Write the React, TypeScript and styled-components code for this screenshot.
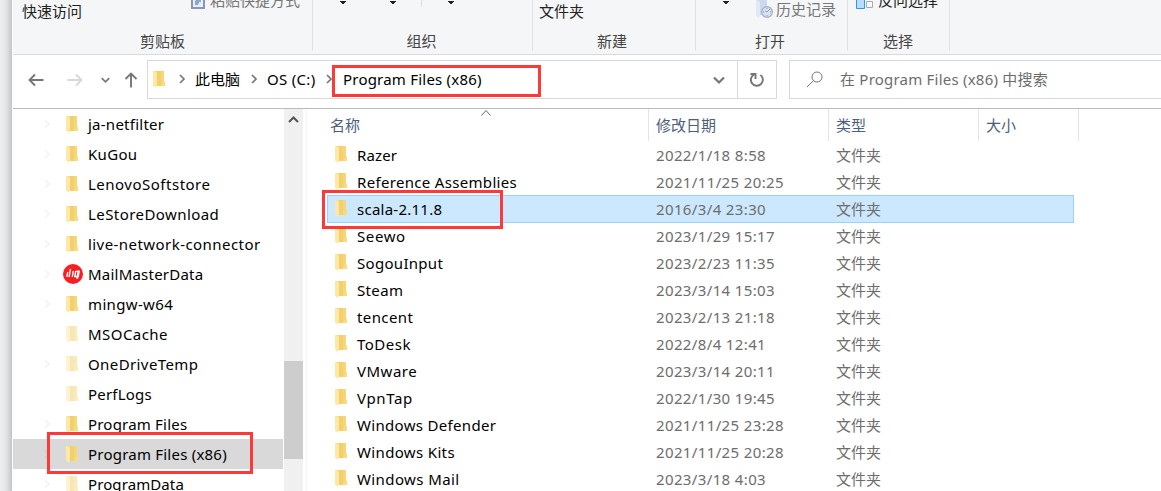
import styled, { createGlobalStyle, css } from 'styled-components'

type TreeEntry = { name: string; tracking: number; icon?: 'folder' | 'faded' | 'mail'; leaf?: boolean; selected?: boolean }

const TREE: TreeEntry[] = [
  { name: 'ja-netfilter', tracking: 0.25 },
  { name: 'KuGou', tracking: 0.3 },
  { name: 'LenovoSoftstore', tracking: 0.5 },
  { name: 'LeStoreDownload', tracking: 0.43 },
  { name: 'live-network-connector', tracking: 0.44 },
  { name: 'MailMasterData', tracking: 0.22, icon: 'mail' },
  { name: 'mingw-w64', tracking: 0.35 },
  { name: 'MSOCache', tracking: 0.45, icon: 'faded', leaf: true },
  { name: 'OneDriveTemp', tracking: 0.4, icon: 'faded' },
  { name: 'PerfLogs', tracking: 0.2, icon: 'faded', leaf: true },
  { name: 'Program Files', tracking: 0.2 },
  { name: 'Program Files (x86)', tracking: 0.22, selected: true },
  { name: 'ProgramData', tracking: 0.1, icon: 'faded' },
]

const FILES = [
  { name: 'Razer', tracking: 0.15, date: '2022/1/18 8:58' },
  { name: 'Reference Assemblies', tracking: 0.32, date: '2021/11/25 20:25' },
  { name: 'scala-2.11.8', tracking: 0.25, date: '2016/3/4 23:30', selected: true },
  { name: 'Seewo', tracking: 0.6, date: '2023/1/29 15:17' },
  { name: 'SogouInput', tracking: 0.3, date: '2023/2/23 11:35' },
  { name: 'Steam', tracking: 0.35, date: '2023/3/14 15:03' },
  { name: 'tencent', tracking: 0.4, date: '2023/2/13 21:18' },
  { name: 'ToDesk', tracking: 0.5, date: '2022/8/4 12:41' },
  { name: 'VMware', tracking: 0.5, date: '2023/3/14 20:11' },
  { name: 'VpnTap', tracking: 0.6, date: '2022/1/30 19:45' },
  { name: 'Windows Defender', tracking: 0.32, date: '2021/11/25 23:28' },
  { name: 'Windows Kits', tracking: 0.35, date: '2021/11/25 20:28' },
  { name: 'Windows Mail', tracking: 0.4, date: '2023/3/18 4:03' },
]

const FolderIcon = ({ faded = false }: { faded?: boolean }) => (
  <svg width="12" height="17" viewBox="0 0 12 17" opacity={faded ? 0.5 : 1}>
    <path d="M1 0h10v10.5h1V15H3z" fill="#fbdc7c" />
    <path d="M4 0h4v15H4z" fill="#f3d06e" />
    <path d="M8 0h3v10.5L8 14z" fill="#f7d677" />
    <path d="M0 0h1l3 2v12l-1 3-3-2.5z" fill="#ffe8a5" />
  </svg>
)

const MailIcon = () => (
  <svg width="20" height="20" viewBox="0 0 20 20">
    <circle cx="10" cy="10" r="10" fill="#fa1e23" />
    <path
      d="M4.7 8l-.9 5M7.5 5L6 13M10.3 7l-1 6M12.8 7l-1 5.5h2.5M16.3 6.5L15 13.5M13.5 7.2h2.8M15.2 7L14 15"
      fill="none"
      stroke="#fff"
      strokeWidth="1.4"
    />
  </svg>
)

const Chevron = ({ color = '#777' }: { color?: string }) => (
  <svg width="6" height="10" viewBox="0 0 6 10">
    <path d="M1 1l4 4-4 4" fill="none" stroke={color} strokeWidth="1.7" />
  </svg>
)

const DownChevron = ({ size = 12 }: { size?: number }) => (
  <svg width={size} height="8" viewBox="0 0 12 8">
    <path d="M1 1.5l5 5 5-5" fill="none" stroke="#767676" strokeWidth="2.2" />
  </svg>
)

const Arrow = ({ color, angle = 0 }: { color: string; angle?: number }) => (
  <svg width="16" height="16" viewBox="0 0 16 16">
    <path
      d="M15.5 8H1.5M7 2.5L1.5 8 7 13.5"
      fill="none"
      stroke={color}
      strokeWidth="1.9"
      transform={`rotate(${angle} 8 8)`}
    />
  </svg>
)

const MenuMark = () => (
  <svg width="8" height="5" viewBox="0 0 8 5">
    <path d="M1 1h6v1H6v1H5v1H3V3H2V2H1z" fill="#222" />
  </svg>
)

const PasteIcon = () => (
  <svg width="14" height="18" viewBox="0 0 14 18">
    <path d="M1 3h12v14H1z" fill="#e9eef7" stroke="#8697bb" strokeWidth="2" />
    <path d="M4 14v-4l2-2-1-1h5v5l-1-2-2 4z" fill="#8fa4cb" />
  </svg>
)

const HistoryIcon = () => (
  <svg width="17" height="20" viewBox="0 0 17 20">
    <path d="M1 1h10v15H1z" fill="#cbd9ee" />
    <path d="M0 1h1l3 2v13l-1 3-3-2z" fill="#e0e9f6" />
    <circle cx="11" cy="13" r="5.3" fill="#dae2ef" stroke="#a6b4cf" strokeWidth="1.5" />
    <path d="M11 9v1M7 13h1M14 13h1M11 16v1M14 10l-3 3-2-1" fill="none" stroke="#8c9dbf" />
  </svg>
)

const InvertIcon = () => (
  <svg width="18" height="18" viewBox="0 0 18 18">
    <path d="M.5 8.5h8v9h-8z" fill="#b7ddfa" stroke="#2f96e9" />
    <path d="M10.5 10.5h6v6h-6z" fill="#fafafa" stroke="#aaa" />
  </svg>
)

export default function App() {
  return (
    <>
      <GlobalStyle />
      <Page>
        <DesktopEdge />
        <Explorer>
          <Ribbon>
            <RibbonGroup $width={300}>
              <RibbonCommands>
                <Command $left={9} $top={-1}>快速访问</Command>
                <Command $left={178} $top={-12} $muted><PasteIcon /><span>粘贴快捷方式</span></Command>
              </RibbonCommands>
              <GroupName>剪贴板</GroupName>
            </RibbonGroup>
            <RibbonGroup $width={220}>
              <RibbonCommands>
                <Mark $left={26}><MenuMark /></Mark>
                <Mark $left={76}><MenuMark /></Mark>
                <ShortDivider />
                <Mark $left={134}><MenuMark /></Mark>
              </RibbonCommands>
              <GroupName $nudge={2}>组织</GroupName>
            </RibbonGroup>
            <RibbonGroup $width={163}>
              <RibbonCommands><Command $left={6} $top={-1}>文件夹</Command></RibbonCommands>
              <GroupName $nudge={4}>新建</GroupName>
            </RibbonGroup>
            <RibbonGroup $width={152}>
              <RibbonCommands>
                <Mark $left={26}><MenuMark /></Mark>
                <Command $left={60} $top={-3} $muted $gap={3}><HistoryIcon />历史记录</Command>
              </RibbonCommands>
              <GroupName $nudge={3}>打开</GroupName>
            </RibbonGroup>
            <RibbonGroup $width={102}>
              <RibbonCommands><Command $left={8} $top={-12} $gap={4}><InvertIcon />反向选择</Command></RibbonCommands>
              <GroupName $nudge={1}>选择</GroupName>
            </RibbonGroup>
          </Ribbon>

          <Navigation>
            <NavButtons>
              <Arrow color="#767676" />
              <Arrow color="#d8d8d8" angle={180} />
              <DownChevron size={9} />
              <Arrow color="#767676" angle={90} />
            </NavButtons>
            <AddressBar>
              <FolderIcon />
              <Crumb $gap={14}><Chevron /></Crumb>
              <Crumb $gap={10}>此电脑</Crumb>
              <Crumb $gap={11}><Chevron /></Crumb>
              <Crumb $gap={10}><Label $tracking={0.3}>OS (C:)</Label></Crumb>
              <Crumb $gap={11}><Chevron /></Crumb>
              <Crumb $gap={10.5}><Label $tracking={0.22}>Program Files (x86)</Label></Crumb>
              <AddressMenu><DownChevron /></AddressMenu>
              <Refresh>
                <svg width="16" height="16" viewBox="0 0 16 16">
                  <path d="M5 2.5A6 6 0 1 0 11.5 3M1.5 2h5v5" fill="none" stroke="#767676" strokeWidth="1.9" />
                </svg>
              </Refresh>
              <Callout $left={184} $top={4} $width={209} $height={32} />
            </AddressBar>
            <Search>
              <svg width="17" height="17" viewBox="0 0 17 17">
                <path d="M6.5 9.5L0 16" stroke="#777" />
                <circle cx="10" cy="6" r="5" fill="none" stroke="#777" />
              </svg>
              <Label $tracking={0.22}>在 Program Files (x86) 中搜索</Label>
            </Search>
          </Navigation>

          <Content>
            <Tree>
              {TREE.map((entry) => (
                <TreeRow key={entry.name} $selected={entry.selected}>
                  <Expander>{!entry.leaf && <Chevron color={entry.selected ? '#cdcdcd' : '#f3f3f3'} />}</Expander>
                  <TreeIcon>{entry.icon === 'mail' ? <MailIcon /> : <FolderIcon faded={entry.icon === 'faded'} />}</TreeIcon>
                  <Label $tracking={entry.tracking}>{entry.name}</Label>
                  {entry.selected && <Callout $left={34} $top={-7} $width={206} $height={42} />}
                </TreeRow>
              ))}
            </Tree>
            <Scrollbar>
              <svg width="11" height="7" viewBox="0 0 11 7"><path d="M1 6l4.5-4.5L10 6" fill="none" stroke="#555" strokeWidth="2" /></svg>
              <Thumb />
            </Scrollbar>
            <FileList>
              <Headings>
                <Heading>名称<SortMark><svg width="10" height="6" viewBox="0 0 10 6"><path d="M.5 5.5l4.5-5 4.5 5" fill="none" stroke="#666" /></svg></SortMark></Heading>
                <Heading>修改日期</Heading>
                <Heading>类型</Heading>
                <Heading>大小</Heading>
              </Headings>
              {FILES.map((file) => (
                <FileRow key={file.name} $selected={file.selected}>
                  <FileName><FolderIcon /><Label $tracking={file.tracking}>{file.name}</Label></FileName>
                  <Detail><Label $tracking={0.37}>{file.date}</Label></Detail>
                  <Detail>文件夹</Detail>
                  {file.selected && <Callout $left={-5} $top={-5} $width={181} $height={39} />}
                </FileRow>
              ))}
            </FileList>
          </Content>
        </Explorer>
      </Page>
    </>
  )
}

const GlobalStyle = createGlobalStyle`
  * { box-sizing: border-box; }
  body { margin: 0; background: #fff; overflow: hidden; }
`

const Page = styled.main`
  display: flex;
  width: 1161px;
  height: 491px;
  overflow: hidden;
  font: 15px/24px 'Noto Sans', 'Noto Sans CJK SC', sans-serif;
  color: #000;

  svg { flex: none; overflow: visible; }
`

const DesktopEdge = styled.div`
  width: 13px;
  flex: none;
  background: linear-gradient(90deg, #eeeff0 0, #e4e5e6 6px, #cacaca 11px, #c5c5c5 12px, #fff 12px);
`

const Explorer = styled.div`
  width: 1148px;
  display: flex;
  flex-direction: column;
`

const Ribbon = styled.header`
  display: flex;
  height: 55px;
  flex: none;
  background: #f5f6f7;
  border-bottom: 1px solid #d9dadb;
`

const RibbonGroup = styled.section<{ $width: number }>`
  width: ${({ $width }) => $width}px;
  height: 51px;
  border-right: 1px solid #e0e1e2;
`

const RibbonCommands = styled.div`
  position: relative;
  height: 29px;
`

const Command = styled.div<{ $left: number; $top: number; $muted?: boolean; $gap?: number }>`
  position: absolute;
  left: ${({ $left }) => $left}px;
  top: ${({ $top }) => $top}px;
  display: flex;
  align-items: center;
  gap: ${({ $gap = 5 }) => $gap}px;
  white-space: nowrap;
  color: ${({ $muted }) => ($muted ? '#777' : '#222')};
`

const Mark = styled.div<{ $left: number }>`
  position: absolute;
  left: ${({ $left }) => $left}px;
  top: 0;
  display: flex;
`

const ShortDivider = styled.div`
  position: absolute;
  left: 108px;
  width: 1px;
  height: 7px;
  background: #ddd;
`

const GroupName = styled.div<{ $nudge?: number }>`
  padding-right: ${({ $nudge = 0 }) => $nudge}px;
  text-align: center;
  color: #444;
`

const Navigation = styled.nav`
  display: flex;
  align-items: center;
  height: 53px;
  padding-bottom: 4px;
  flex: none;
`

const NavButtons = styled.div`
  display: flex;
  align-items: center;
  width: 134px;
  flex: none;
  padding-left: 15px;

  svg:nth-child(2) { margin-left: 23px; }
  svg:nth-child(3) { margin-left: 18px; }
  svg:nth-child(4) { margin-left: 13px; }
`

const AddressBar = styled.div`
  position: relative;
  display: flex;
  align-items: center;
  width: 630px;
  height: 39px;
  padding-left: 5px;
  border: 1px solid #d9d9d9;
`

const Crumb = styled.div<{ $gap: number }>`
  display: flex;
  align-items: center;
  margin-left: ${({ $gap }) => $gap}px;
  padding-bottom: 1px;
`

const AddressMenu = styled.div`
  margin-left: auto;
  padding-right: 12px;
  display: flex;
`

const Refresh = styled.div`
  display: grid;
  place-items: center;
  width: 39px;
  height: 37px;
  border-left: 1px solid #d9d9d9;
`

const Search = styled.div`
  display: flex;
  align-items: center;
  flex: 1;
  height: 39px;
  margin-left: 12px;
  padding: 0 0 1px 17px;
  border: 1px solid #d9d9d9;
  border-right: 0;
  color: #6d6d6d;

  svg { margin-right: 16px; }
`

const Content = styled.div`
  display: flex;
  height: 383px;
  border-top: 1px solid #bababa;
`

const Tree = styled.aside`
  width: 271px;
  flex: none;
`

const TreeRow = styled.div<{ $selected?: boolean }>`
  position: relative;
  display: flex;
  align-items: center;
  width: 270px;
  height: 30px;
  background: ${({ $selected }) => ($selected ? '#d9d9d9' : 'transparent')};
`

const Expander = styled.span`
  display: flex;
  width: 50px;
  padding-left: 31px;
`

const TreeIcon = styled.span`
  display: flex;
  justify-content: center;
  width: 18px;
  margin-right: 7px;

  svg[width='20'] { margin-left: 2px; }
`

const Label = styled.span<{ $tracking: number }>`
  letter-spacing: ${({ $tracking }) => $tracking}px;
  white-space: nowrap;
`

const Scrollbar = styled.div`
  width: 19px;
  flex: none;
  padding: 7px 0 0 4px;
  position: relative;
  display: flex;
  background: #f0f0f0;
`

const Thumb = styled.div`
  position: absolute;
  left: 0;
  top: 252px;
  width: 19px;
  height: 98px;
  background: #cdcdcd;
`

const FileList = styled.section`
  flex: 1;
  margin-left: 3px;
  padding-left: 20px;
  border-left: 1px solid #f5f5f5;
`

const Headings = styled.div`
  display: grid;
  grid-template-columns: 322px 180px 150px 100px;
  height: 32px;
`

const Heading = styled.div`
  position: relative;
  height: 32px;
  padding: 4px 0 0 7px;
  border-right: 1px solid #e4e4e4;
  color: #4c607a;

  &:first-child { padding-left: 3px; }
`

const SortMark = styled.div`
  position: absolute;
  left: 154px;
  top: 1px;
  display: flex;
`

const FileRow = styled.div<{ $selected?: boolean }>`
  position: relative;
  display: grid;
  grid-template-columns: 329px 180px 150px;
  align-items: center;
  width: 747px;
  height: 27px;
  ${({ $selected }) =>
    $selected &&
    css`
      height: 28px;
      padding-bottom: 1px;
      margin-bottom: -1px;
      background: #cce8ff;
      box-shadow: inset 0 0 0 1px #99d1ff;
    `}
`

const FileName = styled.div`
  display: flex;
  align-items: center;
  padding-left: 8px;
  gap: 10px;
`

const Detail = styled.div`
  color: #6d6d6d;
`

const Callout = styled.div<{ $left: number; $top: number; $width: number; $height: number }>`
  position: absolute;
  left: ${({ $left }) => $left}px;
  top: ${({ $top }) => $top}px;
  width: ${({ $width }) => $width}px;
  height: ${({ $height }) => $height}px;
  border: 3px solid #ff3838;
  z-index: 2;
  pointer-events: none;
`
